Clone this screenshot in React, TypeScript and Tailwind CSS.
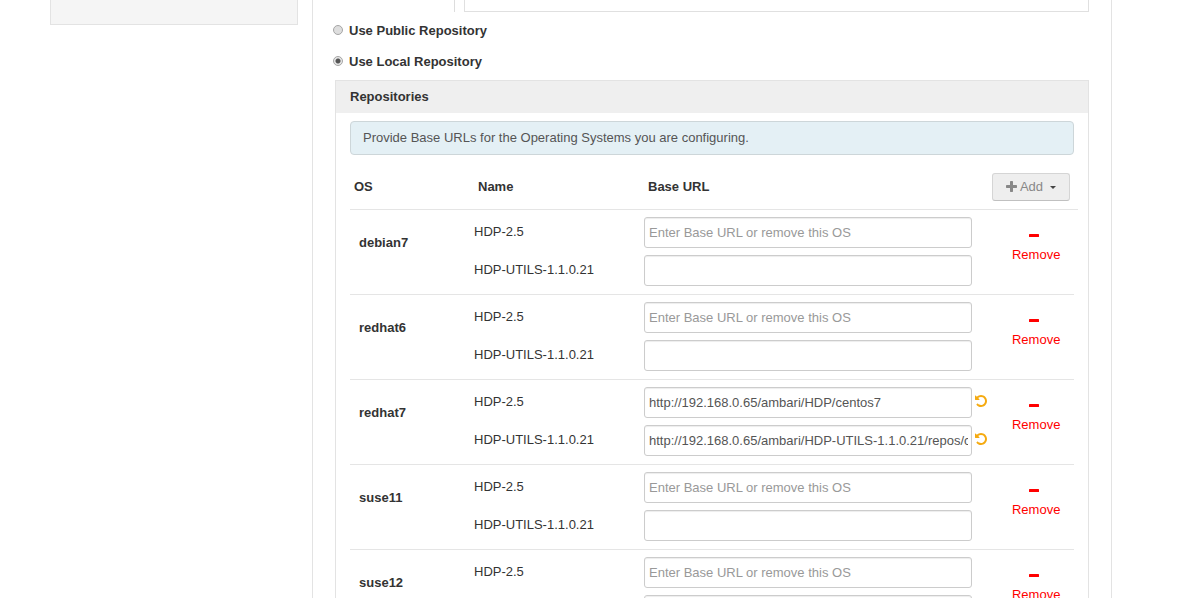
import { useState } from 'react';

interface Repo {
  name: string;
  url: string;
  placeholder?: string;
  undo?: boolean;
}

interface OsEntry {
  os: string;
  repos: Repo[];
}

const HINT = 'Enter Base URL or remove this OS';

const emptyRepos: Repo[] = [
  { name: 'HDP-2.5', url: '', placeholder: HINT },
  { name: 'HDP-UTILS-1.1.0.21', url: '' },
];

const initialEntries: OsEntry[] = [
  { os: 'debian7', repos: emptyRepos },
  { os: 'redhat6', repos: emptyRepos },
  {
    os: 'redhat7',
    repos: [
      { name: 'HDP-2.5', url: 'http://192.168.0.65/ambari/HDP/centos7', undo: true },
      { name: 'HDP-UTILS-1.1.0.21', url: 'http://192.168.0.65/ambari/HDP-UTILS-1.1.0.21/repos/centos7', undo: true },
    ],
  },
  { os: 'suse11', repos: emptyRepos },
  { os: 'suse12', repos: emptyRepos },
];

function PlusIcon() {
  return (
    <svg viewBox="0 0 1408 1792" className="h-3.5 w-[11px] fill-current" aria-hidden="true">
      <path d="M1408 736v192q0 40-28 68t-68 28h-416v416q0 40-28 68t-68 28h-192q-40 0-68-28t-28-68v-416h-416q-40 0-68-28t-28-68v-192q0-40 28-68t68-28h416v-416q0-40 28-68t68-28h192q40 0 68 28t28 68v416h416q40 0 68 28t28 68z" />
    </svg>
  );
}

function UndoIcon() {
  return (
    <svg viewBox="0 0 1536 1792" className="h-3.5 w-3 fill-current" aria-hidden="true">
      <path d="M1536 896q0 156-61 298t-164 245-245 164-298 61q-172 0-327-72.5t-264-204.5q-7-10-6.5-22.5t8.5-20.5l137-138q10-9 25-9 16 2 23 12 73 95 179 147t225 52q104 0 198.5-40.5t163.5-109.5 109.5-163.5 40.5-198.5-40.5-198.5-109.5-163.5-163.5-109.5-198.5-40.5q-98 0-188 35.5t-160 101.5l137 138q31 30 14 69-17 40-59 40h-448q-26 0-45-19t-19-45v-448q0-42 40-59 39-17 69 14l130 129q107-101 244.5-156.5t284.5-55.5q156 0 298 61t245 164 164 245 61 298z" />
    </svg>
  );
}

function RadioOption({ label, checked, onSelect }: { label: string; checked: boolean; onSelect: () => void }) {
  return (
    <label className="flex w-fit items-center gap-1.5 font-bold">
      <input
        type="radio"
        name="repository"
        checked={checked}
        onChange={onSelect}
        className="mb-0.5 h-2.5 w-2.5 appearance-none rounded-full border border-[#a6a6a6] bg-[#dedede] checked:bg-[radial-gradient(circle,#555_0_2px,#e6e6e6_3px)]"
      />
      {label}
    </label>
  );
}

export default function App() {
  const [mode, setMode] = useState('local');
  const [entries, setEntries] = useState(initialEntries);

  const removeOs = (os: string) => {
    setEntries(entries.filter((entry) => entry.os !== os));
  };

  return (
    <div className="flex h-screen items-start gap-3.5 overflow-hidden bg-white pr-[77px] pl-[50px] font-['Liberation_Sans',Arial,sans-serif] text-[13px] leading-5 text-[#333]">
      <aside className="h-[25px] w-[248px] shrink-0 border border-t-0 border-[#e3e3e3] bg-[#f5f5f5]" />

      <main className="min-h-screen min-w-0 flex-1 border-x border-[#e3e3e3]">
        <div className="mr-[22px] flex h-3 gap-[9px]">
          <div className="w-[142px] border-r border-[#ddd]" />
          <div className="flex-1 border border-t-0 border-[#e0e0e0]" />
        </div>

        <div className="flex flex-col gap-[11px] pt-[9px] pl-5">
          <RadioOption label="Use Public Repository" checked={mode === 'public'} onSelect={() => setMode('public')} />
          <RadioOption label="Use Local Repository" checked={mode === 'local'} onSelect={() => setMode('local')} />
        </div>

        <section className="mt-2 mr-[22px] ml-[22px] border border-[#e3e3e3]">
          <h2 className="bg-[#efefef] px-3.5 py-1.5 font-bold">Repositories</h2>

          <div className="px-3.5 py-2">
            <div className="rounded-[4px] border border-[#cdd6d9] bg-[#e4f0f5] px-3 py-1.5 text-[#555]">
              Provide Base URLs for the Operating Systems you are configuring.
            </div>

            {/* the heading rule runs 4px past the rows */}
            <table className="w-[calc(100%+4px)] table-fixed border-separate border-spacing-0">
              <colgroup>
                <col className="w-[124px]" />
                <col className="w-[170px]" />
                <col />
                <col className="w-[82px]" />
                <col className="w-1" />
              </colgroup>
              <thead>
                <tr className="text-left">
                  <th className="border-b border-[#e5e5e5] px-1 pt-[18px] pb-2">OS</th>
                  <th className="border-b border-[#e5e5e5] px-1 pt-[18px] pb-2">Name</th>
                  <th className="border-b border-[#e5e5e5] px-1 pt-[18px] pb-2">Base URL</th>
                  <th colSpan={2} className="border-b border-[#e5e5e5] pt-[18px] pr-2 pb-2">
                    <button
                      type="button"
                      className="flex h-7 w-full items-center justify-center rounded-[3px] border border-[#d5d5d5] border-b-[#c0c0c0] bg-[#eee] font-normal text-[#888]"
                    >
                      <PlusIcon />
                      <span className="ml-[3px]">Add</span>
                      <svg viewBox="0 0 6 3" className="ml-[7px] h-[3px] w-1.5 fill-[#444]" aria-hidden="true">
                        <path d="M0 0h6L3 3z" />
                      </svg>
                    </button>
                  </th>
                </tr>
              </thead>
              <tbody>
                {entries.map(({ os, repos }) => (
                  <tr key={os} className="align-top">
                    <th scope="row" className="border-b border-[#e5e5e5] pt-[23px] pl-[9px] text-left">
                      {os}
                    </th>
                    <td className="border-b border-[#e5e5e5] pt-1.5">
                      <div className="flex flex-col gap-[7px]">
                        {repos.map((repo) => (
                          <label key={repo.name} htmlFor={`${os}-${repo.name}`} className="flex h-[31px] items-center">
                            {repo.name}
                          </label>
                        ))}
                      </div>
                    </td>
                    <td className="border-b border-[#e5e5e5] pt-[7px] pb-2">
                      <div className="flex flex-col gap-[7px]">
                        {repos.map((repo) => (
                          <div key={repo.name} className="flex">
                            <input
                              id={`${os}-${repo.name}`}
                              type="text"
                              defaultValue={repo.url}
                              placeholder={repo.placeholder}
                              className="h-[31px] min-w-0 flex-1 rounded-[3px] border border-[#ccc] bg-white pr-[3px] pl-1 text-[#555] shadow-[inset_0_1px_1px_rgba(0,0,0,0.075)] placeholder:text-[#999]"
                            />
                            <div className="flex w-5 items-center pb-1 pl-[3px]">
                              {repo.undo && (
                                <button type="button" aria-label={`Undo ${repo.name}`} className="text-[#f5aa10]">
                                  <UndoIcon />
                                </button>
                              )}
                            </div>
                          </div>
                        ))}
                      </div>
                    </td>
                    <td className="border-b border-[#e5e5e5] pt-[15px] pl-5">
                      <button type="button" onClick={() => removeOs(os)} className="text-left text-[#f00]">
                        <span className="flex h-5 items-center pl-[17px]">
                          <svg viewBox="0 0 10 3" className="h-[3px] w-2.5 fill-current" aria-hidden="true">
                            <rect width="10" height="3" rx="0.5" />
                          </svg>
                        </span>
                        Remove
                      </button>
                    </td>
                  </tr>
                ))}
              </tbody>
            </table>
          </div>
        </section>
      </main>
    </div>
  );
}
